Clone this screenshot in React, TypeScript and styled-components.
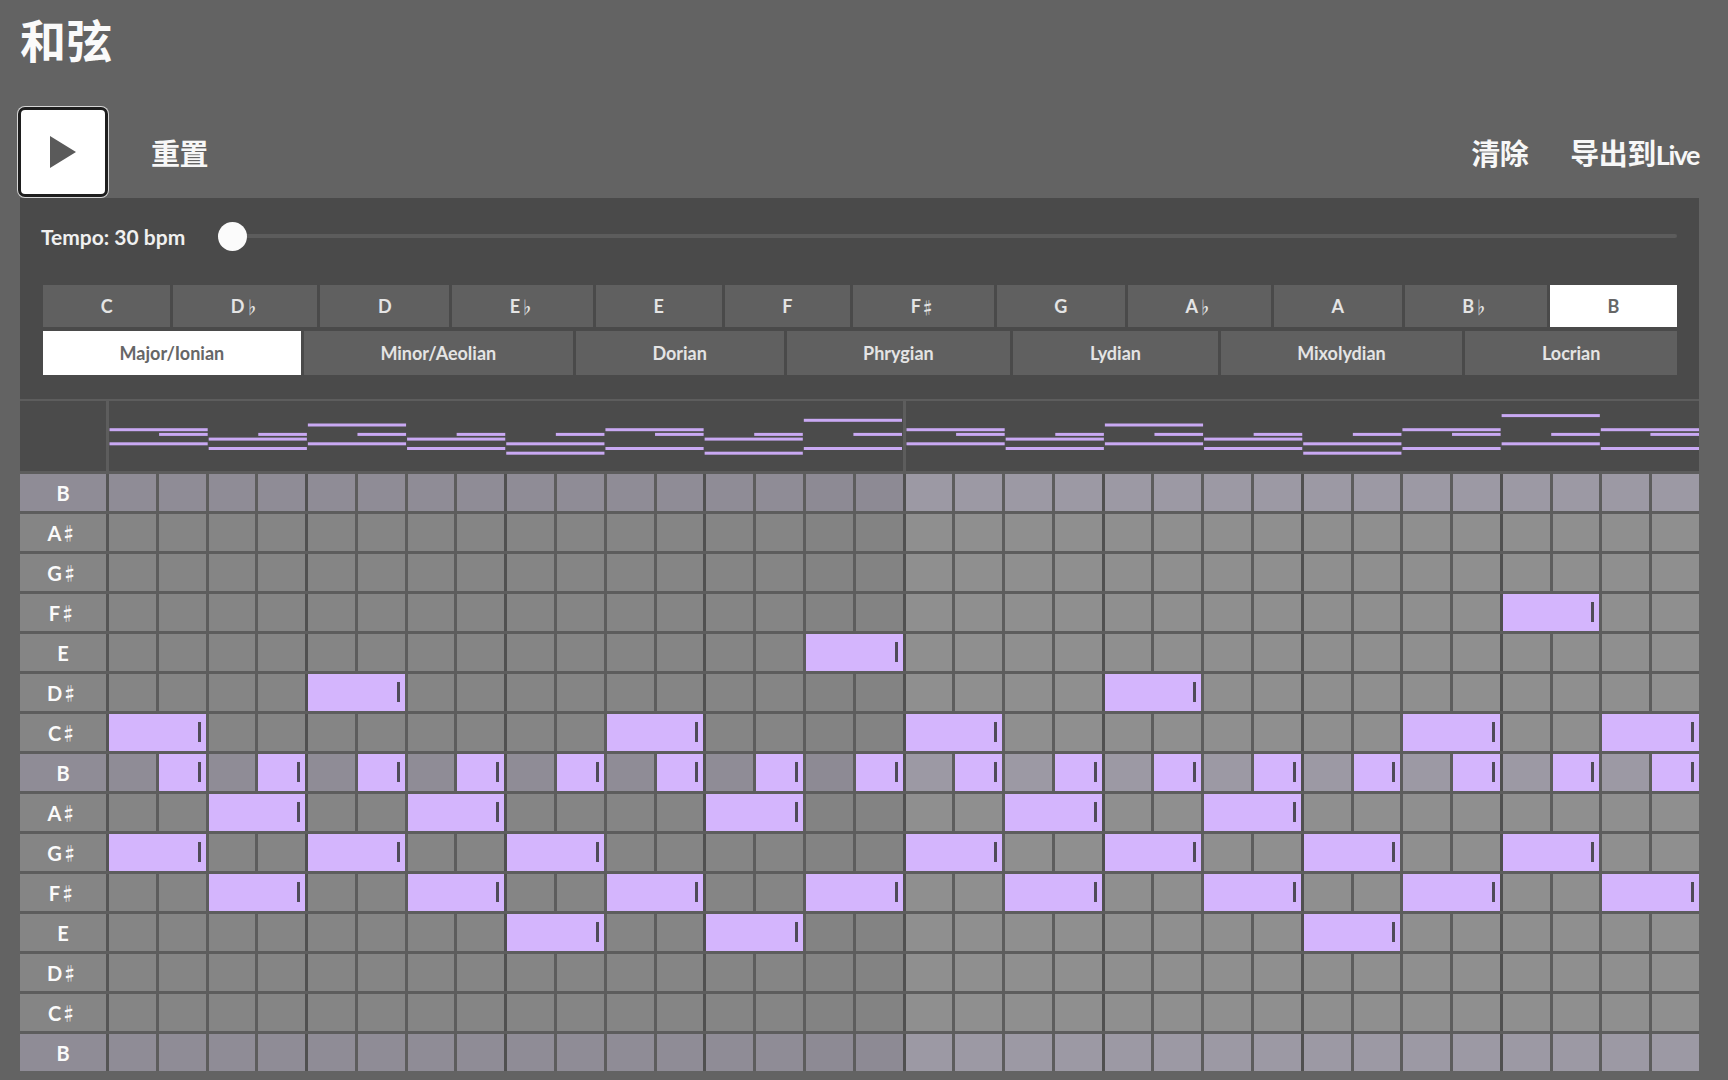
import * as React from "react";
import styled, { createGlobalStyle } from "styled-components";

const GlobalStyle = createGlobalStyle`
    html, body {
        margin: 0;
        padding: 0;
        background: #636363;
        overflow: hidden;
    }
    body {
        font-family: Lato, "Noto Sans CJK SC", sans-serif;
        color: #f2f2f2;
    }
`;

const KEYS = ["C", "D♭", "D", "E♭", "E", "F", "F♯", "G", "A♭", "A", "B♭", "B"];
const MODES = ["Major/Ionian", "Minor/Aeolian", "Dorian", "Phrygian", "Lydian", "Mixolydian", "Locrian"];
const ROWS = ["B", "A♯", "G♯", "F♯", "E", "D♯", "C♯", "B", "A♯", "G♯", "F♯", "E", "D♯", "C♯", "B"];

// rows (index into ROWS) of the two-step notes in each chord, plus the B on the off step
const CHORDS = [
    [6, 9], [8, 10], [5, 9], [8, 10], [9, 11], [6, 10], [8, 11], [4, 10],
    [6, 9], [8, 10], [5, 9], [8, 10], [9, 11], [6, 10], [3, 9], [6, 10],
];

type Note = { row: number; col: number; len: number };

const NOTES: Note[] = CHORDS.flatMap((rows, k) => [
    ...rows.map(row => ({ row, col: k * 2, len: 2 })),
    { row: 7, col: k * 2 + 1, len: 1 },
]);

const PLAYING = [14, 15];

const Page = styled.div`
    padding: 0 29px 0 20px;
`;

const Title = styled.h1`
    margin: 0;
    padding-top: 15px;
    font-family: "Noto Sans CJK SC", sans-serif;
    font-size: 46px;
    line-height: 46px;
    font-weight: 700;
    color: #fafafa;
`;

const Toolbar = styled.div`
    display: flex;
    align-items: center;
    height: 90px;
    margin-top: 46px;
`;

const PlayButton = styled.button`
    width: 90px;
    height: 90px;
    margin-left: -2px;
    display: flex;
    align-items: center;
    justify-content: center;
    background: #fff;
    border: 3px solid #1e1e1e;
    border-radius: 7px;
    box-shadow: 0 0 0 1px #d6d6d6;
    padding: 0;
`;

const TextButton = styled.span<{ $gap: number }>`
    margin-left: ${p => p.$gap}px;
    font-family: "Noto Sans CJK SC", sans-serif;
    font-size: 29px;
    font-weight: 700;
    color: #f7f7f7;
    letter-spacing: -0.5px;
`;

const Latin = styled.span`
    font-family: Lato, sans-serif;
    font-size: 27px;
    letter-spacing: -1.5px;
`;

const Spacer = styled.div`
    flex: 1;
`;

const Panel = styled.div`
    margin-top: 1px;
    background: #4a4a4a;
    padding: 20px 22px 24px 23px;
`;

const TempoRow = styled.div`
    display: flex;
    align-items: center;
    height: 36px;
    margin-bottom: 31px;
`;

const TempoLabel = styled.div`
    width: 177px;
    margin-left: -2px;
    font-size: 21px;
    font-weight: 700;
    color: #f0f0f0;
    white-space: nowrap;
`;

const Slider = styled.input`
    flex: 1;
    margin: 0;
    height: 29px;
    background: transparent;
    -webkit-appearance: none;
    appearance: none;

    &::-webkit-slider-runnable-track {
        height: 4px;
        border-radius: 2px;
        background: #5c5c5c;
    }
    &::-webkit-slider-thumb {
        -webkit-appearance: none;
        width: 29px;
        height: 29px;
        margin-top: -12.5px;
        border-radius: 50%;
        background: #fbfbfb;
        border: none;
    }
`;

const ChoiceRow = styled.div<{ $h: number; $mb?: number }>`
    display: flex;
    gap: 3px;
    height: ${p => p.$h}px;
    margin-bottom: ${p => p.$mb || 0}px;
`;

const Choice = styled.div<{ $active?: boolean; $size: number }>`
    flex: 1 1 auto;
    display: flex;
    align-items: center;
    justify-content: center;
    background: ${p => (p.$active ? "#ffffff" : "#606060")};
    color: ${p => (p.$active ? "#666666" : "#e4e4e4")};
    font-size: ${p => p.$size}px;
    font-weight: 700;
    white-space: nowrap;
`;

const Accidental = styled.span`
    display: inline-block;
    margin-left: -2px;
    font-size: 0.95em;
    transform: scaleX(0.75);
`;

const Grid = styled.div`
    display: grid;
    grid-template-columns: 86px repeat(32, 1fr);
    grid-template-rows: 70px repeat(15, 37px);
    gap: 3px;
    padding-top: 2px;
    background: #5d5d5d;
`;

const HeaderCell = styled.div<{ $span: number }>`
    grid-column: span ${p => p.$span};
    background: #4b4b4b;
`;

const Label = styled.div<{ $tonic: boolean }>`
    display: flex;
    align-items: center;
    justify-content: center;
    background: ${p => (p.$tonic ? "#8f8c96" : "#858585")};
    color: #fafafa;
    font-size: 20px;
    font-weight: 700;
    box-shadow: 3px 0 0 #555;
`;

const cellColor = (tonic: boolean, col: number) => {
    const playing = PLAYING.includes(col);
    if (col >= 16) return tonic ? "#9c99a4" : "#8f8f8f";
    if (playing) return tonic ? "#8d8a94" : "#838383";
    return tonic ? "#8f8c96" : "#858585";
};

const Cell = styled.div<{ $bg: string; $beat: boolean }>`
    background: ${p => p.$bg};
    box-shadow: ${p => (p.$beat ? "-3px 0 0 #505050" : "none")};
`;

const NoteBlock = styled.div<{ $span: number; $beat: boolean }>`
    grid-column: span ${p => p.$span};
    position: relative;
    background: #d4b5fd;
    box-shadow: ${p => (p.$beat ? "-3px 0 0 #505050" : "none")};
`;

const Handle = styled.span`
    position: absolute;
    right: 5px;
    top: 8px;
    bottom: 9px;
    width: 3px;
    background: #4f4b58;
`;

const NoteName = ({ name }: { name: string }) => (
    <>
        {name[0]}
        {name.length > 1 && <Accidental>{name.slice(1)}</Accidental>}
    </>
);

const PlayIcon = () => (
    <svg width="26" height="32" viewBox="0 0 26 32">
        <path d="M0 0 L26 16 L0 32 Z" fill="#5a5a5a" />
    </svg>
);

const ChordPreview = ({ half }: { half: number }) => (
    <svg width="100%" height="100%" viewBox="0 0 16 70" preserveAspectRatio="none" style={{ display: "block" }}>
        {NOTES.filter(n => Math.floor(n.col / 16) === half).map((n, i) => (
            <rect
                key={i}
                x={(n.col % 16) + 0.01}
                y={0.5 + n.row * 4.7 - 1.5}
                width={n.len - 0.02}
                height={3}
                fill="#c9a9f3"
            />
        ))}
    </svg>
);

const RowCells = ({ row }: { row: number }) => {
    const tonic = ROWS[row] === "B";
    const items: React.ReactNode[] = [];
    let col = 0;
    while (col < 32) {
        const note = NOTES.find(n => n.row === row && n.col === col);
        const beat = col % 4 === 0 && col > 0;
        if (note) {
            items.push(
                <NoteBlock key={col} $span={note.len} $beat={beat}>
                    <Handle />
                </NoteBlock>
            );
            col += note.len;
        } else {
            items.push(<Cell key={col} $bg={cellColor(tonic, col)} $beat={beat} />);
            col += 1;
        }
    }
    return (
        <>
            <Label $tonic={tonic}><NoteName name={ROWS[row]} /></Label>
            {items}
        </>
    );
};

export default function App() {
    return (
        <Page>
            <GlobalStyle />
            <Title>和弦</Title>
            <Toolbar>
                <PlayButton aria-label="play">
                    <PlayIcon />
                </PlayButton>
                <TextButton $gap={43}>重置</TextButton>
                <Spacer />
                <TextButton $gap={0}>清除</TextButton>
                <TextButton $gap={42}>导出到<Latin>Live</Latin></TextButton>
            </Toolbar>
            <Panel>
                <TempoRow>
                    <TempoLabel>Tempo: 30 bpm</TempoLabel>
                    <Slider type="range" min={30} max={300} defaultValue={30} />
                </TempoRow>
                <ChoiceRow $h={42} $mb={4}>
                    {KEYS.map(k => (
                        <Choice key={k} $size={18} $active={k === "B"}><NoteName name={k} /></Choice>
                    ))}
                </ChoiceRow>
                <ChoiceRow $h={44}>
                    {MODES.map((m, i) => (
                        <Choice key={m} $size={18} $active={i === 0}>{m}</Choice>
                    ))}
                </ChoiceRow>
            </Panel>
            <Grid>
                <HeaderCell $span={1} />
                <HeaderCell $span={16}>
                    <ChordPreview half={0} />
                </HeaderCell>
                <HeaderCell $span={16}>
                    <ChordPreview half={1} />
                </HeaderCell>
                {ROWS.map((_, r) => (
                    <RowCells key={r} row={r} />
                ))}
            </Grid>
        </Page>
    );
}
